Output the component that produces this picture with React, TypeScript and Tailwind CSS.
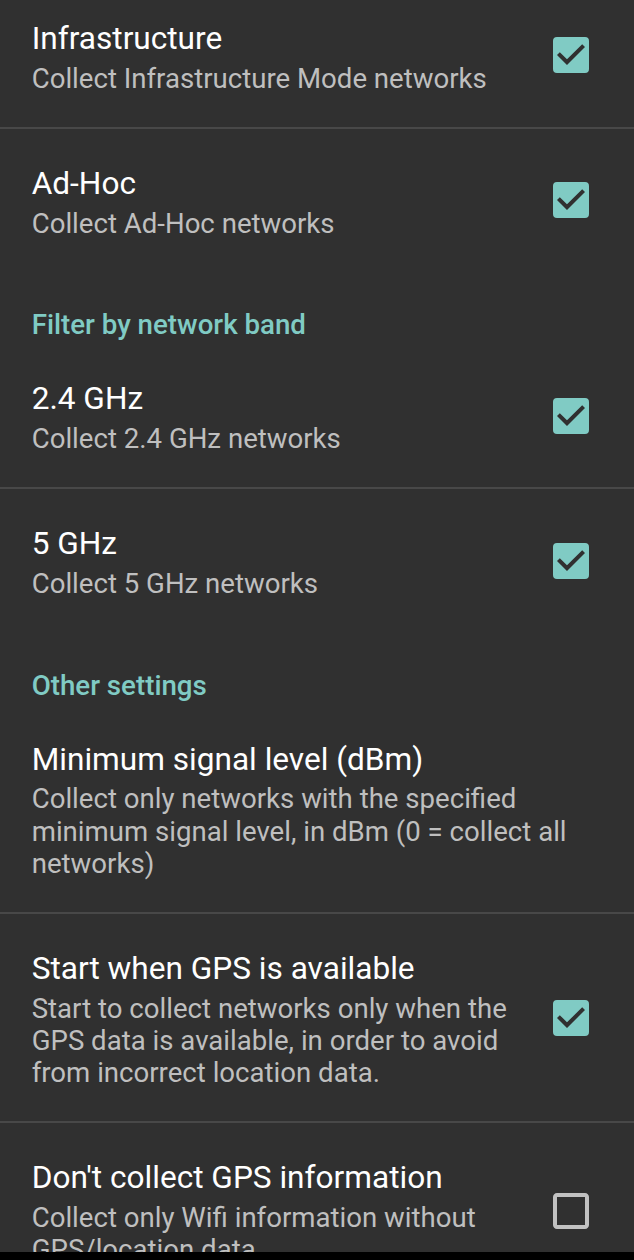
import { MdCheckBox, MdCheckBoxOutlineBlank } from "react-icons/md";

interface PreferenceProps {
  title: string;
  lines: string[];
  checked?: boolean;
  divider?: boolean;
}

function Preference({ title, lines, checked, divider }: PreferenceProps) {
  return (
    <div
      className={`flex shrink-0 items-center justify-between pl-[31.7px] pr-[39.5px] pt-[36.1px] border-[#484848] ${
        divider ? "border-b-2 pb-8" : "pb-[34px]"
      }`}
    >
      <div className="whitespace-nowrap">
        <p className="h-[42.6px] text-[31.6px] leading-[37.5px] text-white">{title}</p>
        {lines.map((line) => (
          <p key={line} className="text-[27.6px] leading-[32.2px] text-[#bfbfbf]">
            {line}
          </p>
        ))}
      </div>
      {checked !== undefined && (
        <div role="checkbox" aria-checked={checked} aria-label={title} className="mb-1">
          {checked ? (
            <MdCheckBox size={48} className="text-[#80cbc4]" />
          ) : (
            <MdCheckBoxOutlineBlank size={48} className="text-[#c1c1c1]" />
          )}
        </div>
      )}
    </div>
  );
}

function Category({ title }: { title: string }) {
  return (
    <h2 className="h-[70.6px] shrink-0 pl-[31.7px] pt-[34.7px] text-[27.7px] font-medium leading-[33px] text-[#80cbc4]">
      {title}
    </h2>
  );
}

export default function App() {
  return (
    <div className="h-[1260px] w-[634px] overflow-hidden bg-black font-[Roboto,sans-serif]">
      <div className="flex h-[1252px] flex-col overflow-hidden bg-[#303030]">
        <div className="-mt-4 flex flex-col">
          <Preference title="Infrastructure" lines={["Collect Infrastructure Mode networks"]} checked divider />
          <Preference title="Ad-Hoc" lines={["Collect Ad-Hoc networks"]} checked />
          <Category title="Filter by network band" />
          <Preference title="2.4 GHz" lines={["Collect 2.4 GHz networks"]} checked divider />
          <Preference title="5 GHz" lines={["Collect 5 GHz networks"]} checked />
          <Category title="Other settings" />
          <Preference
            title="Minimum signal level (dBm)"
            lines={[
              "Collect only networks with the specified",
              "minimum signal level, in dBm (0 = collect all",
              "networks)",
            ]}
            divider
          />
          <Preference
            title="Start when GPS is available"
            lines={[
              "Start to collect networks only when the",
              "GPS data is available, in order to avoid",
              "from incorrect location data.",
            ]}
            checked
            divider
          />
          <Preference
            title="Don't collect GPS information"
            lines={["Collect only Wifi information without", "GPS/location data"]}
            checked={false}
          />
        </div>
      </div>
    </div>
  );
}
